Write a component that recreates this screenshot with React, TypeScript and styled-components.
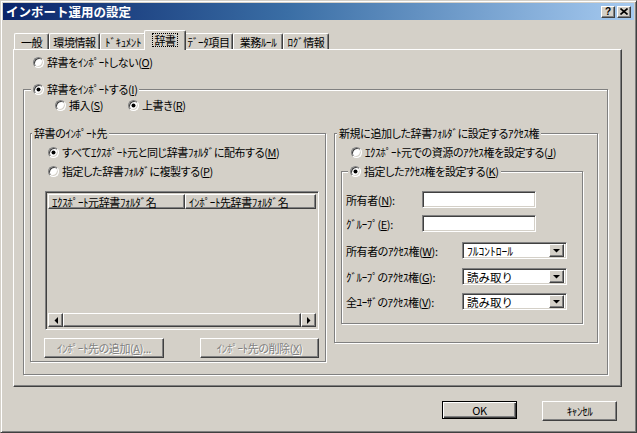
import React from 'react';
import styled, { createGlobalStyle, css } from 'styled-components';

const FACE = '#d4d0c8';
const SHADOW = '#808080';
const DARK = '#404040';
const HI = '#ffffff';

const Global = createGlobalStyle`
  html, body { margin: 0; padding: 0; background: ${FACE}; }
  body {
    font-family: "Noto Sans CJK JP", "Liberation Sans", sans-serif;
    font-size: 11px;
    line-height: 14px;
    letter-spacing: -0.4px;
    color: #000;
    font-feature-settings: "palt";
  }
  * { box-sizing: border-box; }
  u { text-decoration: underline; text-underline-offset: 1px; }
`;

const raised = css`
  border: 1px solid;
  border-color: ${HI} ${DARK} ${DARK} ${HI};
  box-shadow: inset -1px -1px 0 ${SHADOW}, inset 1px 1px 0 ${FACE};
  background: ${FACE};
`;

const sunken = css`
  border: 1px solid;
  border-color: ${SHADOW} ${HI} ${HI} ${SHADOW};
  box-shadow: inset 1px 1px 0 ${DARK}, inset -1px -1px 0 ${FACE};
`;

const Window = styled.div`
  width: 637px;
  height: 433px;
  background: ${FACE};
  border: 1px solid;
  border-color: ${FACE} ${DARK} ${DARK} ${FACE};
  box-shadow: inset 1px 1px 0 ${HI}, inset -1px -1px 0 ${SHADOW};
  padding: 2px;
  display: flex;
  flex-direction: column;
`;

const TitleBar = styled.div`
  height: 17px;
  flex: none;
  display: flex;
  align-items: center;
  padding: 0 3px 0 3px;
  background: linear-gradient(to right, #0a246a 0%, #3a6ea5 45%, #a6caf0 100%);
`;

const Title = styled.span`
  flex: 1;
  color: #fff;
  font-weight: bold;
  font-size: 12.5px;
  letter-spacing: 0;
  font-feature-settings: normal;
`;

const CapButton = styled.span`
  ${raised};
  width: 14px;
  height: 12px;
  display: inline-flex;
  align-items: center;
  justify-content: center;
  margin-left: 2px;
  font-family: "Liberation Sans", sans-serif;
  font-weight: bold;
  font-size: 10px;
  line-height: 10px;
  letter-spacing: 0;
  color: #000;
`;

const Body = styled.div`
  flex: 1;
  display: flex;
  flex-direction: column;
  padding: 11px 12px 0 10px;
`;

const TabStrip = styled.div`
  display: flex;
  align-items: flex-end;
  height: 18px;
  padding-left: 1px;
  position: relative;
  z-index: 1;
`;

const Tab = styled.div<{ $w: number; $sel?: boolean }>`
  width: ${(p) => p.$w}px;
  height: 16px;
  flex: none;
  display: flex;
  align-items: center;
  justify-content: center;
  background: ${FACE};
  border-top: 1px solid ${HI};
  border-left: 1px solid ${HI};
  border-right: 1px solid ${DARK};
  border-top-left-radius: 2px;
  border-top-right-radius: 2px;
  box-shadow: inset -1px 0 0 ${SHADOW};
  white-space: nowrap;
  ${(p) =>
    p.$sel &&
    css`
      width: ${p.$w + 4}px;
      height: 20px;
      margin: 0 -2px -1px -2px;
      padding-bottom: 2px;
      position: relative;
      z-index: 2;
    `}
`;

const Focus = styled.span`
  outline: 1px dotted #000;
  outline-offset: 0px;
  padding: 0 1px;
  line-height: 12px;
`;

const Panel = styled.div`
  height: 338px;
  flex: none;
  background: ${FACE};
  border: 1px solid;
  border-color: ${HI} ${DARK} ${DARK} ${HI};
  box-shadow: inset -1px -1px 0 ${SHADOW};
  padding: 5px 13px 0 9px;
  display: flex;
  flex-direction: column;
`;

const RadioRow = styled.label<{ $ml?: number; $mt?: number; $w?: number }>`
  display: flex;
  align-items: center;
  height: 14px;
  margin-left: ${(p) => p.$ml ?? 0}px;
  margin-top: ${(p) => p.$mt ?? 0}px;
  ${(p) => (p.$w ? `width: ${p.$w}px; flex: none;` : '')}
  white-space: nowrap;
`;

const RadioDot = styled.span<{ $on?: boolean }>`
  width: 11px;
  height: 11px;
  flex: none;
  border-radius: 50%;
  background: #fff;
  border: 1px solid;
  border-color: ${SHADOW} ${HI} ${HI} ${SHADOW};
  box-shadow: inset 1px 1px 0 ${DARK}, inset -1px -1px 0 ${FACE};
  display: inline-flex;
  align-items: center;
  justify-content: center;
  margin-right: 3px;
  ${(p) =>
    p.$on &&
    css`
      &::after {
        content: '';
        width: 3px;
        height: 3px;
        border-radius: 50%;
        background: #000;
        box-shadow: 0 0 0 0.5px #000;
      }
    `}
`;

const Group = styled.div<{ $w: number; $h: number; $ml?: number; $mt?: number }>`
  width: ${(p) => p.$w}px;
  height: ${(p) => p.$h}px;
  flex: none;
  margin-left: ${(p) => p.$ml ?? 0}px;
  margin-top: ${(p) => p.$mt ?? 0}px;
  border: 1px solid ${SHADOW};
  box-shadow: inset 1px 1px 0 ${HI}, 1px 1px 0 ${HI};
  display: flex;
  flex-direction: column;
`;

const Legend = styled.div<{ $ml: number }>`
  align-self: flex-start;
  height: 14px;
  margin-top: -8px;
  margin-left: ${(p) => p.$ml}px;
  padding: 0 2px;
  background: ${FACE};
  display: flex;
  align-items: center;
  white-space: nowrap;
`;

const Row = styled.div<{ $ml?: number; $mt?: number; $gap?: number }>`
  display: flex;
  align-items: flex-start;
  margin-left: ${(p) => p.$ml ?? 0}px;
  margin-top: ${(p) => p.$mt ?? 0}px;
  gap: ${(p) => p.$gap ?? 0}px;
`;

const ListView = styled.div`
  ${sunken};
  width: 274px;
  height: 139px;
  margin-left: 14px;
  margin-top: 13px;
  background: ${FACE};
  padding: 2px;
  display: flex;
  flex-direction: column;
`;

const Header = styled.div`
  display: flex;
  height: 15px;
  flex: none;
`;

const HeadCell = styled.div<{ $w?: number }>`
  ${raised};
  ${(p) => (p.$w ? `width: ${p.$w}px; flex: none;` : 'flex: 1;')}
  height: 15px;
  display: flex;
  align-items: center;
  padding-left: 3px;
  white-space: nowrap;
`;

const ListBody = styled.div`
  flex: 1;
`;

const HScroll = styled.div`
  height: 14px;
  flex: none;
  display: flex;
`;

const ScrollBtn = styled.div`
  ${raised};
  width: 15px;
  height: 14px;
  flex: none;
  display: flex;
  align-items: center;
  justify-content: center;
`;

const ScrollTrack = styled.div`
  ${raised};
  flex: 1;
  height: 14px;
`;

const PushButton = styled.div<{ $w: number; $disabled?: boolean; $default?: boolean }>`
  width: ${(p) => p.$w}px;
  height: ${(p) => (p.$default ? 18 : 20)}px;
  flex: none;
  ${raised};
  display: flex;
  align-items: center;
  justify-content: center;
  white-space: nowrap;
  ${(p) =>
    p.$disabled &&
    css`
      color: ${SHADOW};
      text-shadow: 1px 1px 0 ${HI};
    `}
  ${(p) =>
    p.$default &&
    css`
      border: 1px solid #000;
      box-shadow: inset 1px 1px 0 ${HI}, inset -1px -1px 0 ${DARK}, inset -2px -2px 0 ${SHADOW};
    `}
`;

const FieldRow = styled.div<{ $mt: number }>`
  display: flex;
  align-items: center;
  height: 17px;
  margin-top: ${(p) => p.$mt}px;
  padding-left: 4px;
`;

const FieldLabel = styled.span<{ $w: number }>`
  width: ${(p) => p.$w}px;
  flex: none;
  white-space: nowrap;
`;

const TextBox = styled.div`
  ${sunken};
  width: 114px;
  height: 17px;
  background: #fff;
`;

const Combo = styled.div`
  ${sunken};
  width: 105px;
  height: 17px;
  background: #fff;
  display: flex;
  align-items: center;
  padding: 2px;
`;

const ComboText = styled.span`
  flex: 1;
  padding-left: 2px;
  white-space: nowrap;
  font-size: 11.5px;
  letter-spacing: 0;
  font-feature-settings: normal;
`;

const ComboBtn = styled.span`
  ${raised};
  width: 15px;
  height: 13px;
  flex: none;
  display: flex;
  align-items: center;
  justify-content: center;
`;

const Footer = styled.div`
  display: flex;
  justify-content: flex-end;
  gap: 25px;
  margin-top: 14px;
  padding-right: 5px;
`;

const Arrow = ({ dir }: { dir: 'left' | 'right' | 'down' }) => {
  const pts =
    dir === 'left' ? '4,0 4,7 0.5,3.5' : dir === 'right' ? '0,0 0,7 3.5,3.5' : '0,0 7,0 3.5,3.5';
  const w = dir === 'down' ? 7 : 4;
  const h = dir === 'down' ? 4 : 7;
  return (
    <svg width={w} height={h} viewBox={`0 0 ${w} ${h}`}>
      <polygon points={pts} fill="#000" />
    </svg>
  );
};

const CloseIcon = () => (
  <svg width="8" height="7" viewBox="0 0 8 7">
    <path d="M0.5 0.5 L7.5 6.5 M7.5 0.5 L0.5 6.5" stroke="#000" strokeWidth="1.6" />
  </svg>
);

const Radio = ({
  on,
  children,
  ...rest
}: {
  on?: boolean;
  children: React.ReactNode;
  $ml?: number;
  $mt?: number;
  $w?: number;
}) => (
  <RadioRow {...rest}>
    <RadioDot $on={on} />
    <span>{children}</span>
  </RadioRow>
);

const tabs: { label: string; w: number; sel?: boolean }[] = [
  { label: '一般', w: 35 },
  { label: '環境情報', w: 51 },
  { label: 'ﾄﾞｷｭﾒﾝﾄ', w: 46 },
  { label: '辞書', w: 38, sel: true },
  { label: 'ﾃﾞｰﾀ項目', w: 49 },
  { label: '業務ﾙｰﾙ', w: 50 },
  { label: 'ﾛｸﾞ情報', w: 46 },
];

export default function App() {
  return (
    <>
      <Global />
      <Window>
        <TitleBar>
          <Title>インポート運用の設定</Title>
          <CapButton>?</CapButton>
          <CapButton>
            <CloseIcon />
          </CapButton>
        </TitleBar>
        <Body>
          <TabStrip>
            {tabs.map((t) => (
              <Tab key={t.label} $w={t.w} $sel={t.sel}>
                {t.sel ? <Focus>{t.label}</Focus> : t.label}
              </Tab>
            ))}
          </TabStrip>
          <Panel>
            <Radio $ml={10}>
              辞書をｲﾝﾎﾟｰﾄしない(<u>O</u>)
            </Radio>
            <Group $w={585} $h={286} $mt={20}>
              <Legend $ml={7}>
                <RadioDot $on />
                <span>
                  辞書をｲﾝﾎﾟｰﾄする(<u>I</u>)
                </span>
              </Legend>
              <Row $ml={31} $mt={2}>
                <Radio $w={73}>
                  挿入(<u>S</u>)
                </Radio>
                <Radio on>
                  上書き(<u>R</u>)
                </Radio>
              </Row>
              <Row $ml={6} $mt={21} $gap={8}>
                <Group $w={296} $h={229}>
                  <Legend $ml={1}>辞書のｲﾝﾎﾟｰﾄ先</Legend>
                  <Radio on $ml={17} $mt={5}>
                    すべてｴｸｽﾎﾟｰﾄ元と同じ辞書ﾌｫﾙﾀﾞに配布する(<u>M</u>)
                  </Radio>
                  <Radio $ml={17} $mt={5}>
                    指定した辞書ﾌｫﾙﾀﾞに複製する(<u>P</u>)
                  </Radio>
                  <ListView>
                    <Header>
                      <HeadCell $w={137}>ｴｸｽﾎﾟｰﾄ元辞書ﾌｫﾙﾀﾞ名</HeadCell>
                      <HeadCell>ｲﾝﾎﾟｰﾄ先辞書ﾌｫﾙﾀﾞ名</HeadCell>
                    </Header>
                    <ListBody />
                    <HScroll>
                      <ScrollBtn>
                        <Arrow dir="left" />
                      </ScrollBtn>
                      <ScrollTrack />
                      <ScrollBtn>
                        <Arrow dir="right" />
                      </ScrollBtn>
                    </HScroll>
                  </ListView>
                  <Row $ml={13} $mt={8} $gap={36}>
                    <PushButton $w={120} $disabled>
                      ｲﾝﾎﾟｰﾄ先の追加(<u>A</u>)...
                    </PushButton>
                    <PushButton $w={119} $disabled>
                      ｲﾝﾎﾟｰﾄ先の削除(<u>X</u>)
                    </PushButton>
                  </Row>
                </Group>
                <Group $w={264} $h={210}>
                  <Legend $ml={2}>新規に追加した辞書ﾌｫﾙﾀﾞに設定するｱｸｾｽ権</Legend>
                  <Radio $ml={16} $mt={5}>
                    ｴｸｽﾎﾟｰﾄ元での資源のｱｸｾｽ権を設定する(<u>J</u>)
                  </Radio>
                  <Group $w={242} $h={153} $ml={6} $mt={12}>
                    <Legend $ml={6}>
                      <RadioDot $on />
                      <span>
                        指定したｱｸｾｽ権を設定する(<u>K</u>)
                      </span>
                    </Legend>
                    <FieldRow $mt={13}>
                      <FieldLabel $w={76}>
                        所有者(<u>N</u>):
                      </FieldLabel>
                      <TextBox />
                    </FieldRow>
                    <FieldRow $mt={7}>
                      <FieldLabel $w={76}>
                        ｸﾞﾙｰﾌﾟ(<u>E</u>):
                      </FieldLabel>
                      <TextBox />
                    </FieldRow>
                    <FieldRow $mt={10}>
                      <FieldLabel $w={116}>
                        所有者のｱｸｾｽ権(<u>W</u>):
                      </FieldLabel>
                      <Combo>
                        <ComboText>ﾌﾙｺﾝﾄﾛｰﾙ</ComboText>
                        <ComboBtn>
                          <Arrow dir="down" />
                        </ComboBtn>
                      </Combo>
                    </FieldRow>
                    <FieldRow $mt={9}>
                      <FieldLabel $w={116}>
                        ｸﾞﾙｰﾌﾟのｱｸｾｽ権(<u>G</u>):
                      </FieldLabel>
                      <Combo>
                        <ComboText>読み取り</ComboText>
                        <ComboBtn>
                          <Arrow dir="down" />
                        </ComboBtn>
                      </Combo>
                    </FieldRow>
                    <FieldRow $mt={8}>
                      <FieldLabel $w={116}>
                        全ﾕｰｻﾞのｱｸｾｽ権(<u>V</u>):
                      </FieldLabel>
                      <Combo>
                        <ComboText>読み取り</ComboText>
                        <ComboBtn>
                          <Arrow dir="down" />
                        </ComboBtn>
                      </Combo>
                    </FieldRow>
                  </Group>
                </Group>
              </Row>
            </Group>
          </Panel>
          <Footer>
            <PushButton $w={75} $default>
              OK
            </PushButton>
            <PushButton $w={75}>ｷｬﾝｾﾙ</PushButton>
          </Footer>
        </Body>
      </Window>
    </>
  );
}
